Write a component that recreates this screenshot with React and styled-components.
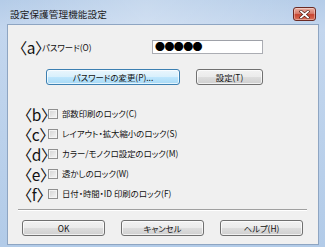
import React from 'react';
import styled, { createGlobalStyle } from 'styled-components';

const GlobalStyle = createGlobalStyle`
  html, body {
    margin: 0;
    padding: 0;
    background: #ffffff;
  }
  body {
    font-family: "Noto Sans CJK JP", "Noto Sans", sans-serif;
    font-feature-settings: "palt";
  }
`;

// ------------- Window frame -------------
const Window = styled.div`
  width: 325px;
  height: 247px;
  box-sizing: border-box;
  display: flex;
  flex-direction: column;
  background: linear-gradient(180deg, #b4cce8 0%, #c3d6ee 12%, #bed3ec 40%, #b2cbe8 100%);
  overflow: hidden;
`;

const TitleBar = styled.div`
  height: 24px;
  flex: none;
  display: flex;
  align-items: center;
  justify-content: space-between;
  padding: 0 9px 0 10px;
  background: linear-gradient(90deg, rgba(255,255,255,0) 0%, rgba(255,255,255,0.25) 45%, rgba(255,255,255,0) 100%);
`;

const Title = styled.span`
  font-size: 9.6px;
  color: #1b1b1b;
  letter-spacing: 0.1px;
  margin-top: 4px;
`;

const CloseButton = styled.div`
  width: 23px;
  height: 14px;
  margin-top: 4px;
  box-sizing: border-box;
  border: 1px solid #6b2a23;
  border-radius: 3px;
  display: flex;
  align-items: center;
  justify-content: center;
  background: linear-gradient(180deg, #eab0a3 0%, #d87d6c 45%, #c8442f 55%, #d8715a 100%);
  box-shadow: inset 0 0 0 1px rgba(255,255,255,0.35);
`;

const Client = styled.div`
  flex: 1;
  margin: 0 6px 2px 7px;
  box-sizing: border-box;
  border: 1px solid #8ea5c2;
  background: #f0f0f0;
  display: flex;
  flex-direction: column;
`;

// ------------- Content -------------
const Tag = styled.span`
  font-size: 15.5px;
  line-height: 15px;
  color: #111;
  width: ${p => p.$w || 24}px;
  flex: none;
  display: inline-block;
  white-space: nowrap;
  margin-top: 2px;
  margin-left: -1px;
`;

const Text = styled.span`
  font-size: 8.4px;
  color: #111;
  white-space: nowrap;
`;

const PasswordRow = styled.div`
  margin-top: 14px;
  height: 15px;
  display: flex;
  align-items: center;
  padding: 0 55px 0 12px;
`;

const PasswordField = styled.div`
  margin-left: auto;
  width: 111px;
  height: 14px;
  box-sizing: border-box;
  border: 1px solid #abadb3;
  border-top-color: #9ea1a8;
  background: #fff;
  display: flex;
  align-items: center;
  padding-left: 2px;
  font-size: 10px;
  letter-spacing: -0.6px;
  color: #000;
`;

const ButtonRow = styled.div`
  margin-top: 15px;
  display: flex;
  gap: 16px;
  padding-left: ${p => p.$left}px;
`;

const Button = styled.div`
  width: ${p => p.$w}px;
  height: 16px;
  box-sizing: border-box;
  border: 1px solid ${p => (p.$focus ? '#3c7fb1' : '#707070')};
  border-radius: 3px;
  display: flex;
  align-items: center;
  justify-content: center;
  font-size: 8.4px;
  color: #111;
  background: ${p =>
    p.$focus
      ? 'linear-gradient(180deg, #eaf6fd 0%, #d9f0fc 48%, #bee6fd 52%, #a7d9f5 100%)'
      : 'linear-gradient(180deg, #f2f2f2 0%, #ebebeb 48%, #dddddd 52%, #cfcfcf 100%)'};
  box-shadow: inset 0 0 0 1px rgba(255,255,255,0.7);
`;

const CheckList = styled.div`
  margin-top: 18px;
  display: flex;
  flex-direction: column;
  padding-left: 17px;
`;

const CheckRow = styled.div`
  height: 20px;
  display: flex;
  align-items: center;
`;

const CheckBox = styled.span`
  width: 10px;
  height: 10px;
  flex: none;
  box-sizing: border-box;
  border: 1px solid #8f8f8f;
  background: linear-gradient(135deg, #d2d2d2 0%, #e8e8e8 60%, #f6f6f6 100%);
  box-shadow: inset 0 0 0 1px #f4f4f4;
  margin: 1px 4px 0 0;
`;

const Separator = styled.div`
  margin: 6px 11px 0 10px;
  height: 0;
  border-top: 1px solid #a0a0a0;
  border-bottom: 1px solid #ffffff;
`;

const Footer = styled.div`
  margin-top: 9px;
  display: flex;
  gap: 16px;
  padding-left: 14px;
`;

const locks = [
  { tag: '〈b〉', label: '部数印刷のロック(C)' },
  { tag: '〈c〉', label: 'レイアウト・拡大縮小のロック(S)' },
  { tag: '〈d〉', label: 'カラー/モノクロ設定のロック(M)' },
  { tag: '〈e〉', label: '透かしのロック(W)' },
  { tag: '〈f〉', label: '日付・時間・ID 印刷のロック(F)' },
];

export default function App() {
  return (
    <>
      <GlobalStyle />
      <Window>
        <TitleBar>
          <Title>設定保護管理機能設定</Title>
          <CloseButton>
            <svg width="11" height="9" viewBox="0 0 11 9">
              <path d="M2 1.5 L9 7.5 M9 1.5 L2 7.5" stroke="#4a1a12" strokeWidth="3" strokeLinecap="square" />
              <path d="M2 1.5 L9 7.5 M9 1.5 L2 7.5" stroke="#ffffff" strokeWidth="1.8" strokeLinecap="square" />
            </svg>
          </CloseButton>
        </TitleBar>
        <Client>
          <PasswordRow>
            <Tag $w={23}>〈a〉</Tag>
            <Text>パスワード(O)</Text>
            <PasswordField>●●●●●</PasswordField>
          </PasswordRow>
          <ButtonRow $left={38}>
            <Button $w={134} $focus>パスワードの変更(P)...</Button>
            <Button $w={67}>設定(T)</Button>
          </ButtonRow>
          <CheckList>
            {locks.map(l => (
              <CheckRow key={l.tag}>
                <Tag>{l.tag}</Tag>
                <CheckBox />
                <Text>{l.label}</Text>
              </CheckRow>
            ))}
          </CheckList>
          <Separator />
          <Footer>
            <Button $w={83}>OK</Button>
            <Button $w={83}>キャンセル</Button>
            <Button $w={83}>ヘルプ(H)</Button>
          </Footer>
        </Client>
      </Window>
    </>
  );
}
